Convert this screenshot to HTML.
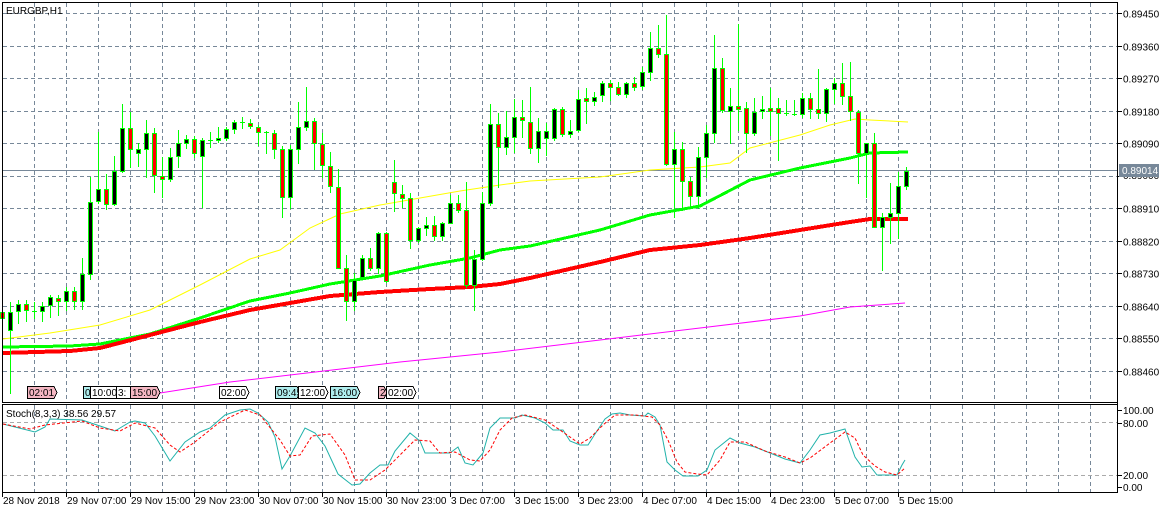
<!DOCTYPE html>
<html><head><meta charset="utf-8"><style>
html,body{margin:0;padding:0;background:#fff;}
svg{display:block;font-family:"Liberation Sans",sans-serif;}
</style></head><body>
<svg id="c" width="1170" height="513" xmlns="http://www.w3.org/2000/svg" shape-rendering="crispEdges"></svg>
<script>
var s='';
function L(x1,y1,x2,y2,c,w,d){s+='<line x1="'+x1+'" y1="'+y1+'" x2="'+x2+'" y2="'+y2+'" stroke="'+c+'" stroke-width="'+(w||1)+'"'+(d?' stroke-dasharray="'+d+'"':'')+'/>';}
function T(x,y,t,fs,c,a){s+='<text x="'+x+'" y="'+y+'" font-size="'+(fs||10)+'" fill="'+(c||'#000')+'"'+(a?' text-anchor="'+a+'"':'')+'>'+t+'</text>';}
function P(pts,c,w,d,sr){s+='<polyline fill="none" points="'+pts.map(function(p){return p.join(',')}).join(' ')+'" stroke="'+c+'" stroke-width="'+w+'"'+(d?' stroke-dasharray="'+d+'"':'')+(sr?' shape-rendering="auto"':'')+'/>';}
var G='#778899';
for(var k=0;k<12;k++){var y=Math.round(13+32.5*k)+.5;L(3,y,1117,y,G,1,'4,3');}
for(var x=34;x<1117;x+=32){L(x+.5,3,x+.5,402,G,1,'4,3');L(x+.5,405,x+.5,492,G,1,'4,3');}
L(3,422.5,1117,422.5,'#aaa',1,'4,3');L(3,475.5,1117,475.5,'#aaa',1,'4,3');
L(3,170.5,1117,170.5,G,1);
P([[160,393],[230,382],[290,375],[400,362],[500,352],[600,340],[700,328],[800,316],[850,307],[905,303]],'#ff00ff',1,null,1);
P([[3,339],[50,333],[100,325],[150,310],[200,285],[250,259],[280,250],[310,228],[340,214],[380,205],[420,198],[460,191],[500,185],[530,181],[600,177],[650,170],[700,167],[730,163],[750,148],[800,135],[830,125],[855,119],[870,120],[908,122]],'#ffff00',1,null,1);
P([[3,347],[70,346],[100,344],[150,334],[200,318],[250,301],[290,293],[330,284],[380,276],[430,265],[470,258],[500,250],[530,246],[600,230],[650,215],[700,206],[750,180],[800,168],[850,158],[870,153],[908,152]],'#00ff00',3);
P([[3,353],[70,351],[100,348],[150,335],[200,322],[250,310],[290,303],[330,296],[380,292],[430,289],[470,287],[500,284],[530,278],[600,262],[650,250],[700,245],[750,238],[800,230],[850,222],[870,219],[908,219]],'#ff0000',4);
var C=[['b',312,330,302,393],['b',304,311,300,323],['r',304,310,300,321],['d',311,311,302,318],['b',306,311,302,321],['b',297,305,295,317],['r',298,301,295,315],['b',291,301,287,310],['r',291,301,287,309],['b',274,301,258,309],
['b',202,274,177,279],['b',189,201,132,203],['r',189,204,174,209],['b',171,204,156,205],['b',128,171,104,172],['r',128,149,112,167],['b',149,153,143,166],['b',133,149,120,177],['r',133,175,128,192],['r',176,179,157,197],
['b',157,179,148,181],['b',143,156,130,167],['b',139,143,135,148],['r',139,153,136,157],['b',140,156,138,207],['d',140,140,132,147],['b',138,140,127,142],['b',129,138,127,140],['b',122,129,120,133],['d',122,122,117,128],
['r',123,126,119,128],['r',127,132,125,145],['d',132,132,131,153],['r',133,149,130,158],['r',149,197,146,217],['b',149,197,145,208],['b',127,149,102,163],['b',121,127,87,130],['r',121,143,118,169],['r',144,165,133,177],
['r',166,186,152,192],['r',187,268,169,268],['r',268,301,255,320],['b',280,301,273,310],['b',258,277,255,279],['r',258,268,248,270],['b',233,268,232,273],['r',233,281,232,282],['r',182,193,160,211],['r',194,198,185,207],
['r',198,240,193,248],['b',228,240,227,242],['b',225,228,217,235],['r',225,236,216,240],['b',223,236,222,240],['b',203,223,195,223],['r',203,210,195,212],['r',210,285,182,287],['b',259,285,250,310],['b',203,259,192,260],
['b',124,203,104,205],['r',124,147,113,187],['b',137,147,111,154],['b',117,137,99,152],['r',117,120,100,137],['r',122,148,87,153],['b',131,148,118,162],['b',131,138,123,155],['b',109,138,108,140],['r',109,134,107,136],
['b',131,134,120,137],['b',99,130,90,131],['r',98,101,88,123],['b',97,101,92,105],['b',83,95,81,101],['r',83,87,80,100],['r',87,94,82,95],['b',83,94,82,97],['r',83,87,77,90],['b',72,86,67,89],
['b',48,72,32,80],['r',48,54,25,57],['r',54,164,15,165],['b',149,164,132,217],['r',149,181,142,210],['r',181,196,177,208],['b',157,196,147,208],['b',133,157,125,177],['b',68,133,35,142],['r',68,110,58,112],
['b',106,111,88,143],['r',106,109,24,130],['r',108,133,102,152],['b',112,133,98,135],['b',109,111,96,118],['r',108,111,88,135],['r',108,113,98,160],['d',113,113,100,115],['d',114,114,100,115],['b',98,114,93,117],
['r',98,109,93,118],['r',109,113,69,118],['b',89,113,88,121],['b',83,89,78,103],['r',83,96,63,104],['r',96,111,62,120],['r',112,153,110,183],['b',143,153,143,197],['r',143,227,133,227],['b',217,227,213,270],
['b',213,217,183,243],['b',186,213,172,238],['b',171,186,167,189]];
C.unshift(['r',312,318,306,322]);
for(var i=0;i<C.length;i++){var c=C[i],cx=2+8*i;
L(cx+.5,c[3],cx+.5,c[4]+1,'#00ff00',1);
if(c[0]=='d'){L(cx-2,c[1]+.5,cx+3,c[1]+.5,'#00ff00',1);}
else{var h=Math.max(c[2]-c[1],2);s+='<rect x="'+(cx-1.5)+'" y="'+(c[1]+.5)+'" width="4" height="'+h+'" fill="'+(c[0]=='b'?'#000':'#ff0000')+'" stroke="#00ff00" stroke-width="1"/>';}}
P([[3,424],[35,432],[45,427],[50,419],[82,420],[100,426],[115,431],[130,422],[135,421],[145,423],[155,436],[170,461],[185,442],[200,432],[210,428],[225,415],[240,410],[250,409],[258,413],[268,422],[275,437],[282,469],[290,456],[305,428],[315,433],[325,446],[338,474],[352,485],[360,484],[370,473],[380,465],[388,465],[395,451],[410,433],[420,441],[425,453],[440,453],[450,453],[458,447],[465,463],[473,465],[483,453],[490,428],[500,418],[515,418],[522,415],[535,418],[545,423],[553,430],[563,430],[570,441],[580,445],[588,445],[595,434],[605,419],[612,414],[620,413],[630,415],[645,416],[648,413],[655,417],[660,425],[667,462],[675,470],[683,476],[698,476],[707,470],[715,450],[730,438],[740,443],[755,447],[770,453],[785,459],[800,463],[810,450],[820,435],[830,433],[845,429],[855,457],[862,467],[870,466],[877,475],[897,475],[902,465],[905,460]],'#20b2aa',1,null,1);
P([[3,424],[30,429],[45,425],[82,421],[100,428],[120,431],[135,423],[155,428],[170,445],[180,452],[195,442],[220,422],[245,410],[260,415],[280,440],[290,456],[300,455],[312,436],[330,434],[345,455],[355,480],[370,480],[385,470],[400,455],[415,440],[430,441],[440,453],[455,452],[470,460],[480,461],[490,450],[500,430],[512,418],[525,415],[545,420],[560,430],[580,444],[590,438],[603,425],[615,415],[635,415],[652,417],[660,425],[668,440],[677,462],[685,472],[697,474],[707,475],[720,460],[730,442],[745,442],[765,451],[785,457],[800,463],[810,458],[830,443],[845,432],[855,438],[863,455],[875,466],[885,472],[897,475],[905,468]],'#ff0000',1,'3,2',1);
L(2.5,2,2.5,403,'#000');L(2,2.5,1118,2.5,'#000');L(1117.5,2,1117.5,493,'#000');L(2,402.5,1118,402.5,'#000');
L(2,404.5,1118,404.5,'#000');L(2.5,404,2.5,493,'#000');L(2,492.5,1118,492.5,'#000');
var pr=['0.89450','0.89360','0.89270','0.89180','0.89090','0.89000','0.88910','0.88820','0.88730','0.88640','0.88550','0.88460'];
for(var k=0;k<12;k++){var y=Math.round(13+32.5*k)+.5;L(1117,y,1122,y,'#000');if(k!=5)T(1123,y+4,pr[k]);}
T(1123,179,'0.89000');
s+='<rect x="1119" y="164" width="40" height="13" fill="#778899" shape-rendering="crispEdges"/>';T(1122,174,'0.89014',10,'#fff');
var sl=[['100.00',410],['80.00',423],['20.00',475],['0.00',487]];
sl.forEach(function(a){L(1117,a[1]+.5,1122,a[1]+.5,'#000');T(1123,a[1]+4,a[0]);});
var tl=['28 Nov 2018','29 Nov 07:00','29 Nov 15:00','29 Nov 23:00','30 Nov 07:00','30 Nov 15:00','30 Nov 23:00','3 Dec 07:00','3 Dec 15:00','3 Dec 23:00','4 Dec 07:00','4 Dec 15:00','4 Dec 23:00','5 Dec 07:00','5 Dec 15:00'];
for(var k=0;k<tl.length;k++){var x=2+64*k;L(x+.5,492,x+.5,497,'#000');T(x+1,504,tl[k]);}
T(6,14,'EURGBP,H1',10);
T(6,417,'Stoch(8,3,3) 38.56 29.57',10);
var bx=[[27,27,'#f4b6c2','02:01'],[83,7,'#afeeee','0'],[90,27,'#fff','10:00'],[116,14,'#fff','3:'],[130,27,'#f4b6c2','15:00'],[219,27,'#fff','02:00'],[275,22,'#afeeee','09:45'],[298,27,'#fff','12:00'],[330,27,'#afeeee','16:00'],[378,6,'#f4b6c2','2'],[386,27,'#fff','02:00']];
bx.forEach(function(b){var x=b[0],w=b[1];s+='<path d="M'+(x+.5)+' 386.5 H'+(x+w)+' L'+(x+w+3)+' 392.5 L'+(x+w)+' 398.5 H'+(x+.5)+' Z" fill="'+b[2]+'" stroke="#000" stroke-width="1"/>';T(x+2,396,b[3],10);});
document.getElementById('c').innerHTML=s;
</script>
</body></html>
